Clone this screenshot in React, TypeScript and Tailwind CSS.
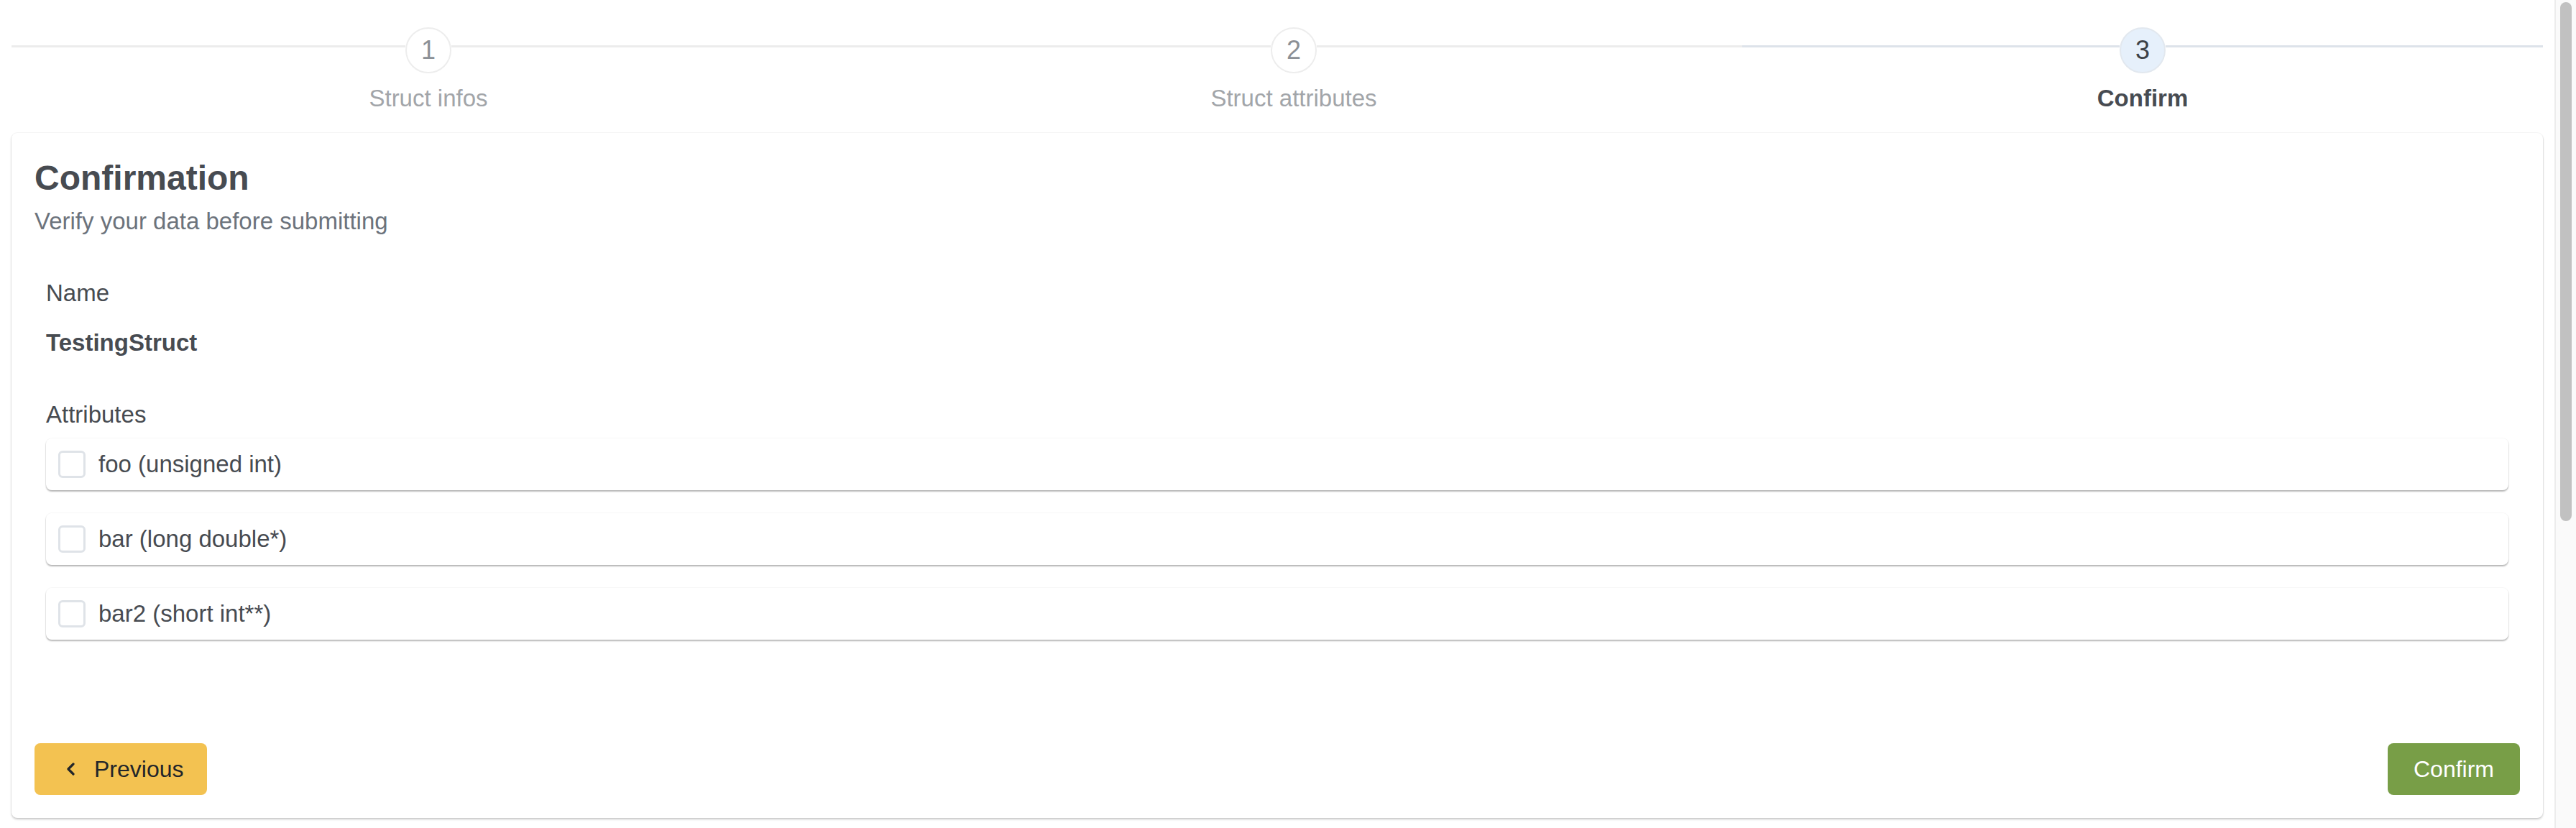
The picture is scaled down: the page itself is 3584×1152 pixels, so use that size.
import React from 'react';

const steps = [
  { n: 1, label: 'Struct infos', active: false },
  { n: 2, label: 'Struct attributes', active: false },
  { n: 3, label: 'Confirm', active: true },
];

const attributes = ['foo (unsigned int)', 'bar (long double*)', 'bar2 (short int**)'];

function Step({ n, label, active }: { n: number; label: string; active: boolean }) {
  const line = active ? 'bg-[#dde3ea]' : 'bg-[#ececec]';
  return (
    <div className="flex flex-col items-center">
      <div className="flex w-full items-start">
        <div className={`flex-1 h-[3px] mt-[25px] ${line}`} />
        <div
          className={
            active
              ? 'w-16 h-16 rounded-full border-2 border-[#e2e8ef] bg-[#e6f0fb] flex items-center justify-center text-[36px] text-[#3e4247]'
              : 'w-16 h-16 rounded-full border-2 border-[#ededed] bg-white flex items-center justify-center text-[36px] text-[#8c9096]'
          }
        >
          {n}
        </div>
        <div className={`flex-1 h-[3px] mt-[25px] ${line}`} />
      </div>
      <div
        className={
          active
            ? 'mt-[11px] text-[33px] leading-[48px] font-bold text-[#474b51]'
            : 'mt-[11px] text-[33px] leading-[48px] text-[#a2a5a9]'
        }
      >
        {label}
      </div>
    </div>
  );
}

export default function App() {
  return (
    <div className="flex w-full h-[1152px] overflow-hidden bg-white font-['Liberation_Sans',Arial,sans-serif]">
      <div className="w-[3554px] px-4">
        <div className="grid grid-cols-[1160px_1248px_1fr] pt-[38px]">
          {steps.map((s) => (
            <Step key={s.n} {...s} />
          ))}
        </div>

        <div className="mt-6 rounded-lg bg-white px-8 pt-[36px] pb-8 shadow-[0_2px_3px_rgba(10,10,10,0.2),0_0_0_1px_rgba(10,10,10,0.04)]">
          <h2 className="text-[48px] leading-[54px] font-bold text-[#474b51]">Confirmation</h2>
          <p className="mt-[9px] text-[33px] leading-[48px] text-[#6c737c]">Verify your data before submitting</p>

          <div className="px-4 text-[#474b51]">
            <div className="mt-[52px] text-[33px] leading-[48px]">Name</div>
            <div className="mt-[21px] text-[33px] leading-[48px] font-bold">TestingStruct</div>
            <div className="mt-[52px] text-[33px] leading-[48px]">Attributes</div>

            <div className="mt-[9px] flex flex-col gap-8">
              {attributes.map((a) => (
                <label
                  key={a}
                  className="flex h-[72px] items-center gap-[18px] rounded-lg bg-white pl-[17px] shadow-[0_2px_2px_rgba(10,10,10,0.28),0_0_0_1px_rgba(10,10,10,0.03)]"
                >
                  <span className="w-[38px] h-[38px] rounded-[6px] border-[3px] border-[#dfe3e8] bg-white" />
                  <span className="text-[33px] leading-[48px] text-[#474b51]">{a}</span>
                </label>
              ))}
            </div>
          </div>

          <div className="mt-[144px] flex items-center justify-between">
            <button className="flex h-[72px] w-[240px] items-center rounded-lg bg-[#f3c251] pl-[44px] text-[32px] text-[#22252a]">
              <svg width="12" height="18" viewBox="0 0 12 18" fill="none">
                <polyline points="10,2 3,9 10,16" stroke="#22252a" strokeWidth="3.2" strokeLinecap="round" strokeLinejoin="round" />
              </svg>
              <span className="ml-[27px]">Previous</span>
            </button>
            <button className="h-[72px] w-[184px] rounded-lg bg-[#789e47] text-[32px] text-white">Confirm</button>
          </div>
        </div>
      </div>

      <div className="flex-1 border-l-2 border-[#ececec] bg-[#fafafa] pl-[6px] pt-[3px]">
        <div className="w-4 h-[722px] rounded-full bg-[#c1c1c1]" />
      </div>
    </div>
  );
}
